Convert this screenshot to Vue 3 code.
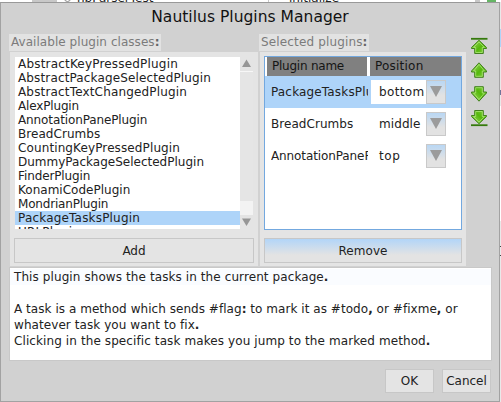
<script setup>
const plugins = [
  ['AbstractKeyPressedPlugin', 160], ['AbstractPackageSelectedPlugin', 193], ['AbstractTextChangedPlugin', 169],
  ['AlexPlugin', 61], ['AnnotationPanePlugin', 129.3], ['BreadCrumbs', 82.3], ['CountingKeyPressedPlugin', 162],
  ['DummyPackageSelectedPlugin', 186], ['FinderPlugin', 72.3], ['KonamiCodePlugin', 112.3], ['MondrianPlugin', 90.3],
  ['PackageTasksPlugin', 122], ['URLPlugin', 62]
]
const selected = [
  { name: 'PackageTasksPlugin', width: 121.5, position: 'bottom', fit: 45.5 },
  { name: 'BreadCrumbs', width: 82.3, position: 'middle', fit: 41.5 },
  { name: 'AnnotationPanePlugin', width: 129.5, position: 'top', fit: 21.3 }
]
const moves = [
  { id: 'top', down: false, bar: true },
  { id: 'up', down: false, bar: false },
  { id: 'down', down: true, bar: false },
  { id: 'bottom', down: true, bar: true }
]
const plainArrow = {
  outline: 'M9 1.8 16.5 10v1H13.3V16.3H4.7V11H1.5v-1z',
  shine: 'M9 3.4 14.4 10H12.3V15.3H5.7V10H3.6z'
}
const barredArrow = {
  outline: 'M9 3.3 16.5 10.5v1H13.3V16.5H4.7V11.5H1.5v-1z',
  shine: 'M9 4.9 14.4 10.5H12.3V15.5H5.7V10.5H3.6z'
}
// Spreads a line's letters so that it takes the given width.
const vFit = {
  mounted(el, { value }) {
    const range = document.createRange()
    range.selectNodeContents(el)
    const rects = [...range.getClientRects()]
    const width = Math.max(...rects.map(r => r.right)) - Math.min(...rects.map(r => r.left))
    el.style.letterSpacing = (value - width) / el.textContent.trim().length + 'px'
  }
}
</script>

<template>
  <div class="desktop">
    <div class="behind">
      <span class="tab first"></span><span class="tab second"><i class="ring"></i><b>nbParserTest</b></span><span class="tab third"><b>initialize</b></span><span class="tab fourth"><i class="dot"></i></span>
    </div>
    <div class="edge"><i class="sel"></i><i class="mark"></i><i class="pale"></i><i class="dash"></i></div>
    <section class="dialog">
      <h1><span v-fit="197.5">Nautilus Plugins Manager</span></h1>
      <div class="columns">
        <div class="column left">
          <label class="caption"><span v-fit="148.5">Available plugin classes<b>:</b></span></label>
          <div class="panel">
            <div class="listbox">
              <ul>
                <li v-for="p in plugins" :key="p[0]" :class="{ active: p[0] === 'PackageTasksPlugin' }"><span v-fit="p[1]">{{ p[0] }}</span></li>
              </ul>
              <div class="scroll">
                <svg width="13" height="14"><path d="M2 10 6.5 2.5 11 10z" fill="#969696" /></svg>
                <div class="thumb"></div>
                <svg width="13" height="14"><path d="M2 3.5h9L6.5 11z" fill="#969696" /></svg>
              </div>
            </div>
            <button class="add">Add</button>
          </div>
        </div>
        <div class="column right">
          <label class="caption"><span v-fit="106.5">Selected plugins<b>:</b></span></label>
          <div class="panel">
            <div class="table">
              <div class="head"><div><span v-fit="72">Plugin name</span></div><div><span v-fit="48.5">Position</span></div></div>
              <div v-for="(r, i) in selected" :key="r.name" class="row" :class="{ active: i === 0 }">
                <span class="name"><span v-fit="r.width">{{ r.name }}</span></span>
                <span class="drop">
                  <span v-fit="r.fit">{{ r.position }}</span>
                  <i><svg width="18" height="22"><path d="M3 5h12L9 16z" fill="#9b9b9b" /></svg></i>
                </span>
              </div>
            </div>
            <button class="remove"><span v-fit="49">Remove</span></button>
          </div>
        </div>
        <div class="moves">
          <svg v-for="m in moves" :key="m.id" width="18" height="18" viewBox="0 0 18 18">
            <defs>
              <linearGradient :id="'g' + m.id" x1="0" x2="1" y1="0" y2="1">
                <stop offset="0" stop-color="#a5dc68" /><stop offset=".55" stop-color="#55b80c" /><stop offset="1" stop-color="#7fd03c" />
              </linearGradient>
            </defs>
            <g :transform="m.down ? 'translate(0 18) scale(1 -1)' : ''">
              <path :d="(m.bar ? barredArrow : plainArrow).outline" :fill="'url(#g' + m.id + ')'" stroke="#43801f" stroke-linejoin="round" />
              <path :d="(m.bar ? barredArrow : plainArrow).shine" fill="none" stroke="#b4ea80" stroke-width=".9" opacity=".8" />
              <path v-if="m.bar" d="M1 1.8h16.5" stroke="#357a0c" stroke-width="1.8" />
            </g>
          </svg>
        </div>
      </div>
      <div class="description">
        <p class="current"><span v-fit="314.5">This plugin shows the tasks in the current package<b>.</b></span></p>
        <p>&nbsp;</p>
        <p><span v-fit="443.7">A task is a method which sends #flag<b>:</b> to mark it as #todo<b>,</b> or #fixme<b>,</b> or</span></p>
        <p><span v-fit="185.5">whatever task you want to fix<b>.</b></span></p>
        <p><span v-fit="416.5">Clicking in the specific task makes you jump to the marked method<b>.</b></span></p>
      </div>
      <footer><button>OK</button><button>Cancel</button></footer>
    </section>
  </div>
</template>

<style>
body { margin: 0; overflow: hidden; }
</style>
<style scoped>
* { box-sizing: border-box; }
.desktop { position: relative; width: 501px; height: 402px; overflow: hidden; background: #ddd; font: 12px/14px "DejaVu Sans", sans-serif; color: #222; }
.behind { display: flex; height: 2px; overflow: hidden; background: #c8c8c8; }
.tab { height: 2px; background: #fff; overflow: hidden; display: flex; }
.tab b { font-weight: 400; line-height: 14px; margin-top: -9px; height: 14px; }
.first { width: 32px; }
.second { width: 211px; margin-left: 25px; padding-left: 7px; gap: 6px; }
.third { width: 206px; margin-left: 1px; padding-left: 20px; }
.fourth { flex: 1; margin-left: 5px; padding-left: 7px; }
.ring { width: 7px; height: 7px; margin-top: -5px; border: 1px solid #888; border-radius: 50%; }
.dot { width: 9px; height: 2px; background: #65b665; }
.edge { position: absolute; left: 500px; top: 2px; width: 1px; height: 400px; background: #e9e9e9; }
.edge i { position: absolute; left: 0; width: 1px; }
.sel { top: 27px; height: 18px; background: #afd4f8; }
.mark { top: 88px; height: 5px; background: #70749a; }
.pale { top: 104px; height: 115px; background: #fff; }
.dash { top: 244px; height: 10px; border-top: 1px solid #444; border-bottom: 1px solid #444; }
.dialog { width: 500px; height: 400px; background: #d1d1d1; border: 1px solid #a2a2a2; border-top-color: #999; padding: 0 8px; display: flex; flex-direction: column; }
h1 { margin: 4px 0 0; height: 27px; font: 400 15.5px/20px "DejaVu Sans", sans-serif; color: #111; text-align: center; }
.columns { display: flex; height: 232px; }
.column { display: flex; flex-direction: column; align-items: flex-start; }
.left { width: 249px; padding-left: 0; }
.right { width: 209px; padding-left: 1px; }
.caption { height: 17px; line-height: 16px; padding: 0 1px 0 2px; background: #e2e2e2; color: #7b7b7b; white-space: nowrap; }
.caption b { color: #666; }
.panel { align-self: stretch; margin-top: 1px; height: 214px; background: #e4e4e4; display: flex; flex-direction: column; }
.left .panel { margin-left: 1px; padding: 5px 4px 0 4px; }
.right .panel { padding: 4px 4px 0; margin-right: 1px; margin-left: 1px; }
.listbox { display: flex; width: 238px; height: 172px; margin-left: 1px; overflow: hidden; background: #fff; }
ul { list-style: none; margin: 0; padding: 0; width: 225px; }
li { height: 14px; padding-left: 3px; white-space: nowrap; }
.active { background: #aed4f9; }
.scroll { width: 13px; display: flex; flex-direction: column; background: #f3f3f3; }
.scroll svg { display: block; flex: none; background: #e4e4e4; }
.thumb { height: 30px; flex: 1; background: #e5e5e5; border-top: 1px solid #f7f7f7; margin-bottom: 14px; }
button { display: block; font: inherit; color: #222; background: #e4e4e4; border: 1px solid #c7c7c7; border-radius: 0; padding: 0; height: 25px; }
.add { margin-top: 9px; width: 240px; }
.table { width: 198px; height: 174px; border: 1px solid #73a8df; background: #fff; overflow: hidden; }
.head { display: flex; gap: 3px; padding-left: 2px; height: 19px; line-height: 18px; color: #151515; }
.head div { background: #808080; width: 100px; padding-left: 5px; }
.head div + div { flex: 1; }
.row { display: flex; height: 32px; padding-left: 6px; align-items: center; }
.name { width: 97px; overflow: hidden; white-space: nowrap; line-height: 32px; }
.drop { margin-left: 3px; background: #fff; width: 75px; height: 24px; display: flex; line-height: 25px; padding-left: 8px; justify-content: space-between; }
.drop i { width: 20px; height: 24px; flex: none; border: 1px solid #c9c9c9; background: linear-gradient(#b9d7f4, #e2e2e2 65%); }
.drop svg { display: block; }
.remove { margin-top: 8px; width: 198px; background: linear-gradient(#b2d5f8, #e3e3e3 70%); }
.moves { width: 24px; padding: 3px 0 0 3px; display: flex; flex-direction: column; gap: 6px; }
.moves svg { display: block; flex: none; }
.description { height: 94px; width: 483px; border: 1px solid #c8c8c8; background: #fff; margin-top: 1px; padding-top: 1px; }
p { margin: 0; height: 16px; line-height: 17px; padding-left: 4px; white-space: nowrap; }
.current { background: #fafcff; }
footer { display: flex; justify-content: flex-end; gap: 8px; margin-top: 8px; }
footer button { width: 49px; height: 24px; }
</style>
